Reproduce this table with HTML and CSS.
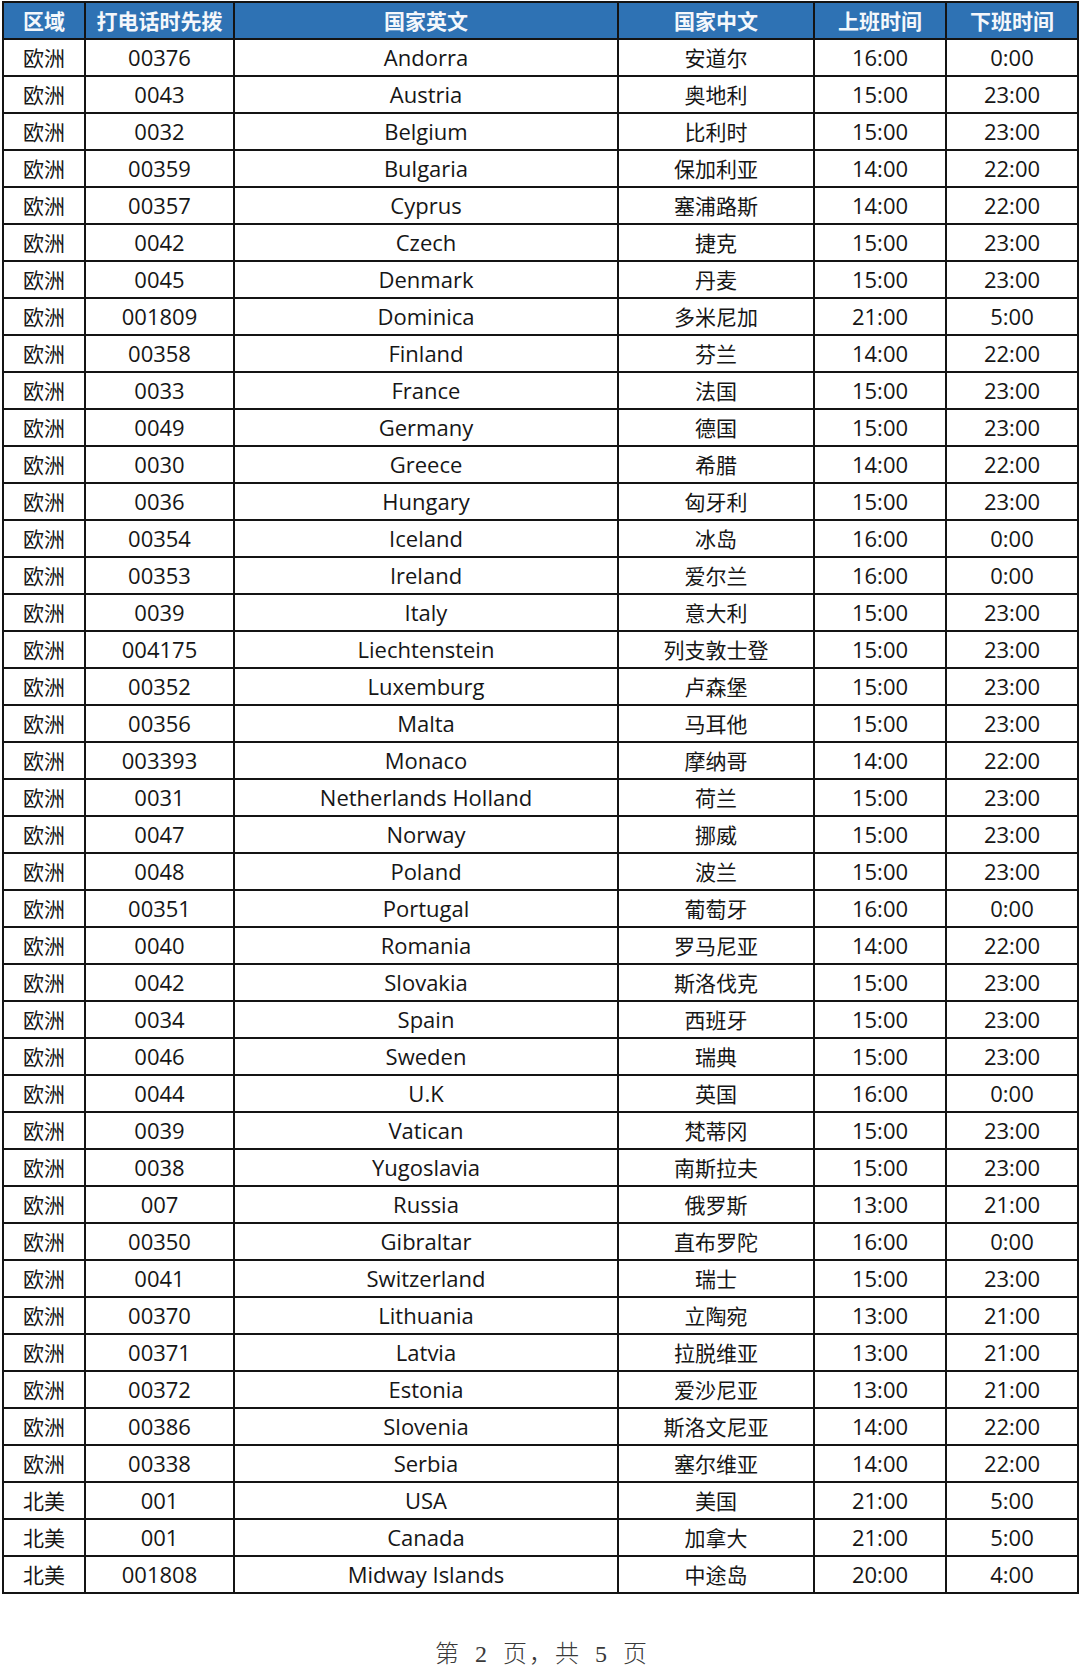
FILE: index.html
```html
<!DOCTYPE html>
<html lang="zh">
<head>
<meta charset="utf-8">
<link rel="stylesheet" href="styles.css">
</head>
<body>
<table class="tbl">
<colgroup>
<col class="c1"><col class="c2"><col class="c3"><col class="c4"><col class="c5"><col class="c6">
</colgroup>
<thead>
<tr><th>区域</th><th>打电话时先拨</th><th>国家英文</th><th>国家中文</th><th>上班时间</th><th>下班时间</th></tr>
</thead>
<tbody>
<tr><td>欧洲</td><td>00376</td><td>Andorra</td><td>安道尔</td><td>16:00</td><td>0:00</td></tr>
<tr><td>欧洲</td><td>0043</td><td>Austria</td><td>奥地利</td><td>15:00</td><td>23:00</td></tr>
<tr><td>欧洲</td><td>0032</td><td>Belgium</td><td>比利时</td><td>15:00</td><td>23:00</td></tr>
<tr><td>欧洲</td><td>00359</td><td>Bulgaria</td><td>保加利亚</td><td>14:00</td><td>22:00</td></tr>
<tr><td>欧洲</td><td>00357</td><td>Cyprus</td><td>塞浦路斯</td><td>14:00</td><td>22:00</td></tr>
<tr><td>欧洲</td><td>0042</td><td>Czech</td><td>捷克</td><td>15:00</td><td>23:00</td></tr>
<tr><td>欧洲</td><td>0045</td><td>Denmark</td><td>丹麦</td><td>15:00</td><td>23:00</td></tr>
<tr><td>欧洲</td><td>001809</td><td>Dominica</td><td>多米尼加</td><td>21:00</td><td>5:00</td></tr>
<tr><td>欧洲</td><td>00358</td><td>Finland</td><td>芬兰</td><td>14:00</td><td>22:00</td></tr>
<tr><td>欧洲</td><td>0033</td><td>France</td><td>法国</td><td>15:00</td><td>23:00</td></tr>
<tr><td>欧洲</td><td>0049</td><td>Germany</td><td>德国</td><td>15:00</td><td>23:00</td></tr>
<tr><td>欧洲</td><td>0030</td><td>Greece</td><td>希腊</td><td>14:00</td><td>22:00</td></tr>
<tr><td>欧洲</td><td>0036</td><td>Hungary</td><td>匈牙利</td><td>15:00</td><td>23:00</td></tr>
<tr><td>欧洲</td><td>00354</td><td>Iceland</td><td>冰岛</td><td>16:00</td><td>0:00</td></tr>
<tr><td>欧洲</td><td>00353</td><td>Ireland</td><td>爱尔兰</td><td>16:00</td><td>0:00</td></tr>
<tr><td>欧洲</td><td>0039</td><td>Italy</td><td>意大利</td><td>15:00</td><td>23:00</td></tr>
<tr><td>欧洲</td><td>004175</td><td>Liechtenstein</td><td>列支敦士登</td><td>15:00</td><td>23:00</td></tr>
<tr><td>欧洲</td><td>00352</td><td>Luxemburg</td><td>卢森堡</td><td>15:00</td><td>23:00</td></tr>
<tr><td>欧洲</td><td>00356</td><td>Malta</td><td>马耳他</td><td>15:00</td><td>23:00</td></tr>
<tr><td>欧洲</td><td>003393</td><td>Monaco</td><td>摩纳哥</td><td>14:00</td><td>22:00</td></tr>
<tr><td>欧洲</td><td>0031</td><td>Netherlands Holland</td><td>荷兰</td><td>15:00</td><td>23:00</td></tr>
<tr><td>欧洲</td><td>0047</td><td>Norway</td><td>挪威</td><td>15:00</td><td>23:00</td></tr>
<tr><td>欧洲</td><td>0048</td><td>Poland</td><td>波兰</td><td>15:00</td><td>23:00</td></tr>
<tr><td>欧洲</td><td>00351</td><td>Portugal</td><td>葡萄牙</td><td>16:00</td><td>0:00</td></tr>
<tr><td>欧洲</td><td>0040</td><td>Romania</td><td>罗马尼亚</td><td>14:00</td><td>22:00</td></tr>
<tr><td>欧洲</td><td>0042</td><td>Slovakia</td><td>斯洛伐克</td><td>15:00</td><td>23:00</td></tr>
<tr><td>欧洲</td><td>0034</td><td>Spain</td><td>西班牙</td><td>15:00</td><td>23:00</td></tr>
<tr><td>欧洲</td><td>0046</td><td>Sweden</td><td>瑞典</td><td>15:00</td><td>23:00</td></tr>
<tr><td>欧洲</td><td>0044</td><td>U.K</td><td>英国</td><td>16:00</td><td>0:00</td></tr>
<tr><td>欧洲</td><td>0039</td><td>Vatican</td><td>梵蒂冈</td><td>15:00</td><td>23:00</td></tr>
<tr><td>欧洲</td><td>0038</td><td>Yugoslavia</td><td>南斯拉夫</td><td>15:00</td><td>23:00</td></tr>
<tr><td>欧洲</td><td>007</td><td>Russia</td><td>俄罗斯</td><td>13:00</td><td>21:00</td></tr>
<tr><td>欧洲</td><td>00350</td><td>Gibraltar</td><td>直布罗陀</td><td>16:00</td><td>0:00</td></tr>
<tr><td>欧洲</td><td>0041</td><td>Switzerland</td><td>瑞士</td><td>15:00</td><td>23:00</td></tr>
<tr><td>欧洲</td><td>00370</td><td>Lithuania</td><td>立陶宛</td><td>13:00</td><td>21:00</td></tr>
<tr><td>欧洲</td><td>00371</td><td>Latvia</td><td>拉脱维亚</td><td>13:00</td><td>21:00</td></tr>
<tr><td>欧洲</td><td>00372</td><td>Estonia</td><td>爱沙尼亚</td><td>13:00</td><td>21:00</td></tr>
<tr><td>欧洲</td><td>00386</td><td>Slovenia</td><td>斯洛文尼亚</td><td>14:00</td><td>22:00</td></tr>
<tr><td>欧洲</td><td>00338</td><td>Serbia</td><td>塞尔维亚</td><td>14:00</td><td>22:00</td></tr>
<tr><td>北美</td><td>001</td><td>USA</td><td>美国</td><td>21:00</td><td>5:00</td></tr>
<tr><td>北美</td><td>001</td><td>Canada</td><td>加拿大</td><td>21:00</td><td>5:00</td></tr>
<tr><td>北美</td><td>001808</td><td>Midway Islands</td><td>中途岛</td><td>20:00</td><td>4:00</td></tr>
</tbody>
</table>
<p class="footer">第 2 页，共 5 页</p>
</body>
</html>
```

FILE: styles.css
```css
html, body {
  margin: 0;
  padding: 0;
  background: #ffffff;
}
body {
  width: 1080px;
  padding-top: 1px;
  padding-left: 2px;
  font-family: "Open Sans", "Noto Sans CJK SC", sans-serif;
  color: #161616;
}
.tbl {
  border-collapse: collapse;
  table-layout: fixed;
  width: 1075px;
}
.c1 { width: 82px; }
.c2 { width: 149px; }
.c3 { width: 384px; }
.c4 { width: 196px; }
.c5 { width: 132px; }
.c6 { width: 132px; }
.tbl th,
.tbl td {
  border: 2px solid #141414;
  height: 35px;
  padding: 0;
  text-align: center;
  vertical-align: middle;
  line-height: 35px;
  white-space: nowrap;
  overflow: hidden;
}
.tbl th {
  background: #2e72b4;
  color: #f4f7fb;
  font-family: "Noto Sans CJK SC", sans-serif;
  font-weight: 700;
  font-size: 21px;
}
.tbl td {
  font-size: 22px;
}
.tbl td:nth-child(1),
.tbl td:nth-child(4) {
  font-family: "Noto Sans CJK SC", sans-serif;
  font-size: 21px;
}
.footer {
  margin: 40px 0 0 0;
  text-align: center;
  font-family: "Liberation Serif", "Noto Sans CJK SC", serif;
  font-weight: 300;
  font-size: 24px;
  color: #3a3a3a;
  word-spacing: 6px;
  letter-spacing: 2px;
}
```
